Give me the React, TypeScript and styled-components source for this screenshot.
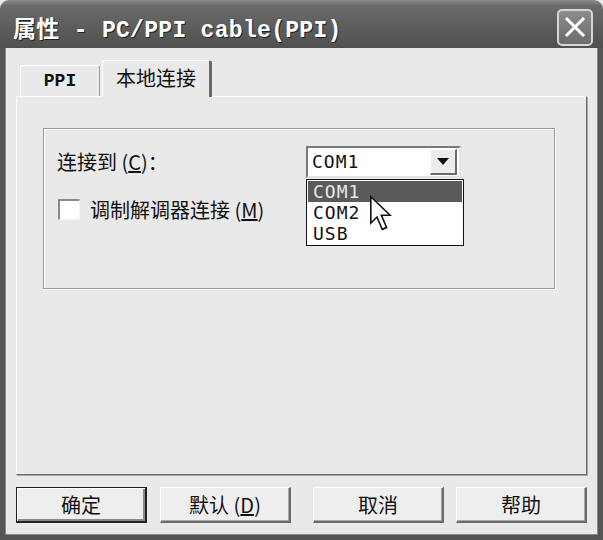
import * as React from 'react';
import styled, { createGlobalStyle } from 'styled-components';

const cjk = `"Noto Sans CJK SC", "Noto Sans", sans-serif`;
const mono = `"Liberation Mono", "Noto Sans CJK SC", monospace`;

const GlobalStyle = createGlobalStyle`
  html, body {
    margin: 0;
    padding: 0;
    background: #e9e9e9;
  }
  * {
    box-sizing: border-box;
  }
`;

const Window = styled.div`
  width: 603px;
  height: 540px;
  display: flex;
  flex-direction: column;
  background: #e9e9e9;
`;

const TitleBar = styled.div`
  height: 48px;
  flex: none;
  display: flex;
  align-items: center;
  justify-content: space-between;
  padding: 6px 10px 0 13px;
  border-radius: 9px 9px 0 0;
  background: linear-gradient(#8a8a8a 0, #6a6a6a 12%, #5c5c5c 60%, #505050 100%);
`;

const Title = styled.div`
  font-family: ${mono};
  font-weight: bold;
  font-size: 23px;
  letter-spacing: 0.3px;
  color: #ffffff;
  text-shadow: 1px 1px 0 #222;
  white-space: pre;
`;

const CloseButton = styled.div`
  width: 36px;
  height: 37px;
  display: flex;
  align-items: center;
  justify-content: center;
  border: 2px solid #d6d6d6;
  border-radius: 5px;
  background: linear-gradient(#8c8c8c, #6c6c6c);
`;

const Body = styled.div`
  flex: 1;
  display: flex;
  flex-direction: column;
  padding: 12px 11px 0 11px;
  border: 5px solid #555;
  border-top: none;
  box-shadow: inset 1px 0 0 #8a8a8a, inset -1px -1px 0 #8a8a8a;
`;

const TabStrip = styled.div`
  height: 36px;
  display: flex;
  align-items: flex-end;
  padding-left: 4px;
  position: relative;
  z-index: 1;
`;

const Tab = styled.div<{ $active?: boolean }>`
  height: ${({ $active }) => ($active ? '37px' : '31px')};
  margin-bottom: ${({ $active }) => ($active ? '-1px' : '0')};
  margin-left: ${({ $active }) => ($active ? '2px' : '0')};
  width: ${({ $active }) => ($active ? '110px' : '80px')};
  display: flex;
  align-items: center;
  justify-content: center;
  padding-bottom: ${({ $active }) => ($active ? '4px' : '0')};
  background: #e9e9e9;
  border-top: 1px solid #ffffff;
  border-left: 1px solid #ffffff;
  border-right: ${({ $active }) => ($active ? '3px solid #6a6a6a' : '1px solid #a0a0a0')};
  border-radius: 3px 3px 0 0;
  font-family: ${({ $active }) => ($active ? cjk : mono)};
  font-size: ${({ $active }) => ($active ? '20px' : '18px')};
  font-weight: ${({ $active }) => ($active ? 'normal' : 'bold')};
  color: #111;
`;

const Panel = styled.div`
  height: 379px;
  padding: 31px 0 0 26px;
  border-top: 1px solid #ffffff;
  border-left: 1px solid #ffffff;
  border-right: 1px solid #6a6a6a;
  border-bottom: 1px solid #6a6a6a;
  box-shadow: 1px 1px 0 #a8a8a8;
`;

const GroupBox = styled.div`
  width: 512px;
  height: 161px;
  padding: 16px 0 0 13px;
  border: 1px solid #9a9a9a;
  box-shadow: inset 1px 1px 0 #ffffff, 1px 1px 0 #ffffff;
`;

const FieldRow = styled.div`
  display: grid;
  grid-template-columns: 249px 155px;
  align-items: center;
  height: 33px;
`;

const Label = styled.span`
  font-family: ${cjk};
  font-size: 20px;
  color: #111;
  white-space: nowrap;
`;

const Key = styled.span`
  text-decoration: underline;
`;

const Combo = styled.div`
  position: relative;
  height: 32px;
  display: flex;
  align-items: center;
  justify-content: space-between;
  padding: 0 2px 0 4px;
  background: #ffffff;
  border-top: 2px solid #7a7a7a;
  border-left: 2px solid #7a7a7a;
  border-right: 2px solid #e2e2e2;
  border-bottom: 2px solid #e2e2e2;
`;

const ComboText = styled.span`
  font-family: "DejaVu Sans Mono", monospace;
  font-size: 18px;
  letter-spacing: 1px;
  color: #111;
`;

const ArrowButton = styled.div`
  width: 27px;
  height: 26px;
  display: flex;
  align-items: center;
  justify-content: center;
  background: #ececec;
  border-top: 1px solid #ffffff;
  border-left: 1px solid #ffffff;
  border-right: 2px solid #6a6a6a;
  border-bottom: 2px solid #6a6a6a;
`;

const DropList = styled.div`
  position: absolute;
  top: 31px;
  left: -2px;
  width: 158px;
  padding: 1px 1px;
  background: #ffffff;
  border: 1px solid #111;
`;

const DropItem = styled.div<{ $selected?: boolean }>`
  height: 21px;
  line-height: 21px;
  padding-left: 5px;
  font-family: "DejaVu Sans Mono", monospace;
  font-size: 18px;
  letter-spacing: 1px;
  background: ${({ $selected }) => ($selected ? '#5a5a5a' : 'transparent')};
  color: ${({ $selected }) => ($selected ? '#e8e8e8' : '#111')};
`;

const Pointer = styled.svg`
  position: absolute;
  left: 61px;
  top: 47px;
`;

const CheckRow = styled.div`
  display: flex;
  align-items: center;
  gap: 10px;
  margin-top: 17px;
  padding-left: 1px;
`;

const CheckBox = styled.div`
  width: 22px;
  height: 21px;
  background: #ffffff;
  border-top: 2px solid #8a8a8a;
  border-left: 2px solid #8a8a8a;
  border-right: 1px solid #f4f4f4;
  border-bottom: 1px solid #f4f4f4;
`;

const ButtonRow = styled.div`
  display: flex;
  margin-top: 12px;
`;

const Button = styled.div<{ $default?: boolean; $gap: number }>`
  width: 131px;
  height: 36px;
  margin-left: ${({ $gap }) => $gap}px;
  display: flex;
  align-items: center;
  justify-content: center;
  background: #eeeeee;
  font-family: ${cjk};
  font-size: 20px;
  color: #111;
  border-top: 1px solid ${({ $default }) => ($default ? '#222' : '#ffffff')};
  border-left: 1px solid ${({ $default }) => ($default ? '#222' : '#ffffff')};
  border-right: 2px solid ${({ $default }) => ($default ? '#222' : '#6a6a6a')};
  border-bottom: 2px solid ${({ $default }) => ($default ? '#222' : '#6a6a6a')};
  box-shadow: ${({ $default }) =>
    $default
      ? 'inset 1px 1px 0 #ffffff, inset -2px -2px 0 #8a8a8a'
      : 'inset -1px -1px 0 #a8a8a8'};
`;

const buttons = [
  { label: '确定', isDefault: true, gap: 0 },
  { label: '默认', key: 'D', gap: 13 },
  { label: '取消', gap: 22 },
  { label: '帮助', gap: 12 },
];

const ports = ['COM1', 'COM2', 'USB'];

export default function App() {
  return (
    <>
      <GlobalStyle />
      <Window>
        <TitleBar>
          <Title>属性 - PC/PPI cable(PPI)</Title>
          <CloseButton>
            <svg width="22" height="22" viewBox="0 0 22 22">
              <path
                d="M3 3 L19 19 M19 3 L3 19"
                stroke="#ffffff"
                strokeWidth="3"
                strokeLinecap="square"
              />
            </svg>
          </CloseButton>
        </TitleBar>
        <Body>
          <TabStrip>
            <Tab>PPI</Tab>
            <Tab $active>本地连接</Tab>
          </TabStrip>
          <Panel>
            <GroupBox>
              <FieldRow>
                <Label>
                  连接到 (<Key>C</Key>)：
                </Label>
                <Combo>
                  <ComboText>COM1</ComboText>
                  <ArrowButton>
                    <svg width="12" height="7" viewBox="0 0 12 7">
                      <path d="M0 0 H12 L6 7 Z" fill="#111" />
                    </svg>
                  </ArrowButton>
                  <DropList>
                    {ports.map((port, index) => (
                      <DropItem key={`port-${port}`} $selected={index === 0}>
                        {port}
                      </DropItem>
                    ))}
                  </DropList>
                  <Pointer width="23" height="37" viewBox="0 0 13 21">
                    <path
                      d="M1 1 L1 16 L4.5 12.5 L7.5 19.5 L10 18.5 L7 11.5 L12 11.5 Z"
                      fill="#ffffff"
                      stroke="#111"
                      strokeWidth="0.9"
                      strokeLinejoin="miter"
                    />
                  </Pointer>
                </Combo>
              </FieldRow>
              <CheckRow>
                <CheckBox />
                <Label>
                  调制解调器连接 (<Key>M</Key>)
                </Label>
              </CheckRow>
            </GroupBox>
          </Panel>
          <ButtonRow>
            {buttons.map((button) => (
              <Button
                key={`btn-${button.label}`}
                $default={button.isDefault}
                $gap={button.gap}
              >
                {button.label}
                {button.key && (
                  <>
                    {' '}(<Key>{button.key}</Key>)
                  </>
                )}
              </Button>
            ))}
          </ButtonRow>
        </Body>
      </Window>
    </>
  );
}
